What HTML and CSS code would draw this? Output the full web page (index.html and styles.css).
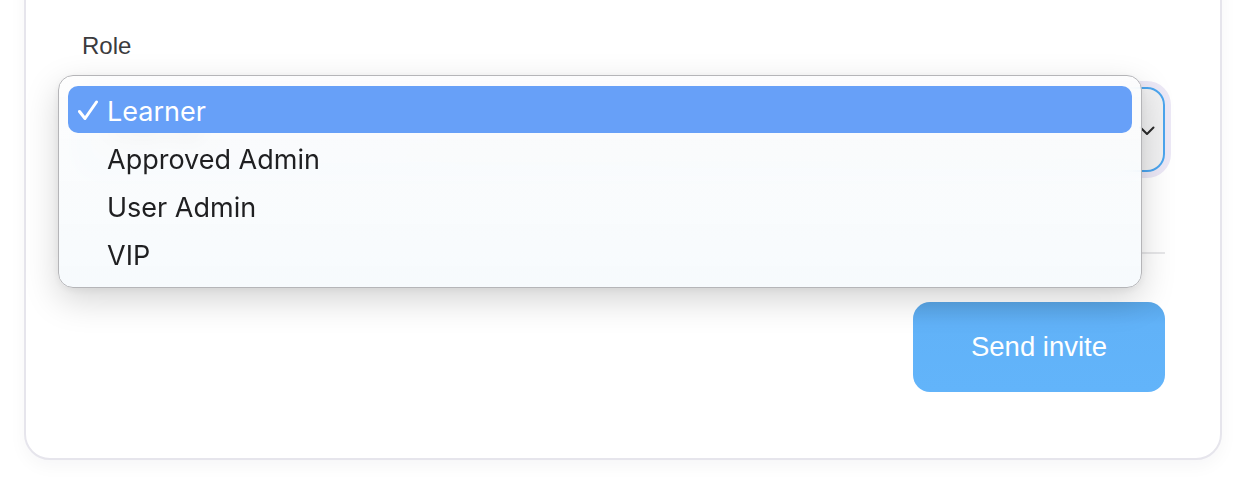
FILE: index.html
```html
<!DOCTYPE html>
<html lang="en">
<head>
<meta charset="utf-8">
<title>Invite</title>
<link rel="stylesheet" href="styles.css">
</head>
<body>
<div class="card">
  <label class="label">Role</label>
  <div class="select-wrap">
    <div class="select">
      <span class="select-value">Learner</span>
      <svg class="chevron" width="16" height="10" viewBox="0 0 16 10"><path d="M1.5 1.5 L8 8 L14.5 1.5" fill="none" stroke="#2b2b2b" stroke-width="2" stroke-linecap="round" stroke-linejoin="round"/></svg>
    </div>
    <div class="menu">
      <div class="item selected">
        <svg class="check" width="20" height="20" viewBox="0 0 20 20"><path d="M1.5 11.5 L7 18.5 L18.5 2" fill="none" stroke="#fff" stroke-width="3" stroke-linecap="round" stroke-linejoin="round"/></svg>
        <span>Learner</span>
      </div>
      <div class="item"><span>Approved Admin</span></div>
      <div class="item"><span>User Admin</span></div>
      <div class="item"><span>VIP</span></div>
    </div>
  </div>
  <div class="divider"></div>
  <div class="actions">
    <button class="btn">Send invite</button>
  </div>
</div>
</body>
</html>
```
FILE: styles.css
```css
* { box-sizing: border-box; }
html, body { margin: 0; padding: 0; background: #ffffff; }
body {
  width: 1260px;
  height: 484px;
  overflow: hidden;
  font-family: "Liberation Sans", Arial, sans-serif;
}
.card {
  margin: -40px 0 0 24px;
  width: 1198px;
  background: #ffffff;
  border: 2px solid #e6e5ec;
  border-radius: 26px;
  box-shadow: 0 6px 18px rgba(30, 30, 60, 0.04);
  padding: 70px 55px 66px 55px;
  display: flex;
  flex-direction: column;
}
.label {
  display: block;
  font-size: 24px;
  line-height: 28px;
  color: #3b3b3d;
  padding-left: 1px;
}
.select-wrap {
  position: relative;
  margin-top: 27px;
}
.select {
  height: 85px;
  border: 2px solid #4ca5ee;
  border-radius: 18px;
  box-shadow: 0 0 0 6px #ece8f6;
  background: linear-gradient(90deg, #f6f6f7, #f1f1f2);
  display: flex;
  align-items: center;
  justify-content: space-between;
  padding: 0 8px 0 24px;
}
.select-value {
  font-family: "Inter", "Liberation Sans", sans-serif;
  font-size: 27px;
  color: #222;
}
.chevron { margin-top: 2px; }
.menu {
  position: absolute;
  left: -23px;
  top: -12px;
  width: 1084px;
  height: 213px;
  border: 1px solid #b5b5b8;
  border-radius: 15px;
  background: linear-gradient(180deg, rgba(253,253,253,0.9), rgba(246,250,253,0.92));
  -webkit-backdrop-filter: blur(10px);
  backdrop-filter: blur(10px);
  box-shadow: 0 12px 34px rgba(0, 0, 0, 0.17), 0 2px 8px rgba(0, 0, 0, 0.06);
  padding: 10px 9px;
  display: flex;
  flex-direction: column;
}
.item {
  height: 48px;
  display: flex;
  align-items: center;
  padding-left: 39px;
  font-family: "Inter", "Liberation Sans", sans-serif;
  font-size: 27px;
  color: #1f1f21;
  border-radius: 10px;
  position: relative;
}
.item span { position: relative; top: 2px; }
.item.selected {
  background: #67a0f8;
  color: #ffffff;
  height: 47px;
  margin-bottom: 1px;
}
.check {
  position: absolute;
  left: 10px;
  top: 14px;
}
.divider {
  margin-top: 80px;
  height: 2px;
  background: #e7e7e9;
}
.actions {
  display: flex;
  justify-content: flex-end;
  margin-top: 48px;
}
.btn {
  width: 252px;
  height: 90px;
  border: none;
  border-radius: 17px;
  background: linear-gradient(180deg, #59a6e7 0%, #61b2f8 25%, #62b4fa 100%);
  color: #ffffff;
  font-family: "Liberation Sans", Arial, sans-serif;
  font-size: 27.5px;
  padding: 0;
}
```
